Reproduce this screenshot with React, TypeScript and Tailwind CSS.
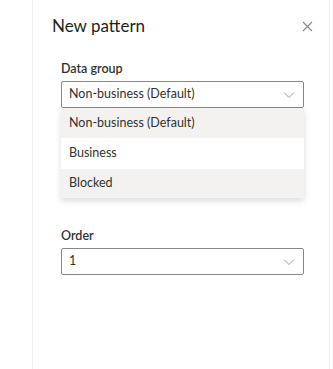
import React from "react";

function Chevron() {
  return (
    <svg width="12" height="8" viewBox="0 0 12 8" fill="none">
      <path d="M1 1.5L6 6.5L11 1.5" stroke="#a19f9d" strokeWidth="1" />
    </svg>
  );
}

export default function App() {
  const font = { fontFamily: 'Lato, "Open Sans", sans-serif' };
  return (
    <div className="w-[333px] h-[369px] bg-white overflow-hidden flex" style={font}>
      <div className="w-[32px] shrink-0" />
      <div className="w-[298px] h-full border-l border-r border-[#eeeeee] relative">
        <div className="flex items-center justify-between pl-[19px] pr-[16px] pt-[15px]">
          <div className="text-[17px] leading-[22px] text-[#201f1e]">New pattern</div>
          <svg width="11" height="11" viewBox="0 0 11 11" className="mt-[0px]">
            <path d="M1 1L10 10M10 1L1 10" stroke="#8a8886" strokeWidth="1.1" />
          </svg>
        </div>
        <div className="pl-[28px] pr-[25px] pt-[24px]">
          <div className="text-[12.5px] leading-[16px] font-semibold text-[#323130]">Data group</div>
          <div className="mt-[4px] h-[27px] border border-[#8a8886] rounded-[2px] flex items-center justify-between pl-[7px] pr-[8px]">
            <span className="text-[12.5px] text-[#323130]">Non-business (Default)</span>
            <Chevron />
          </div>
          <div className="shadow-[0_3px_6px_rgba(0,0,0,0.14)] bg-white">
            <div className="h-[30px] bg-[#f3f2f1] flex items-center pl-[8px] text-[12.5px] text-[#323130]">Non-business (Default)</div>
            <div className="h-[31px] bg-white flex items-center pl-[8px] text-[12.5px] text-[#323130]">Business</div>
            <div className="h-[29px] bg-[#f3f2f1] flex items-center pl-[8px] text-[12.5px] text-[#323130]">Blocked</div>
          </div>
          <div className="mt-[30px] text-[12.5px] leading-[16px] font-semibold text-[#323130]">Order</div>
          <div className="mt-[4px] h-[27px] border border-[#8a8886] rounded-[2px] flex items-center justify-between pl-[7px] pr-[8px]">
            <span className="text-[12.5px] text-[#323130]">1</span>
            <Chevron />
          </div>
        </div>
      </div>
    </div>
  );
}
